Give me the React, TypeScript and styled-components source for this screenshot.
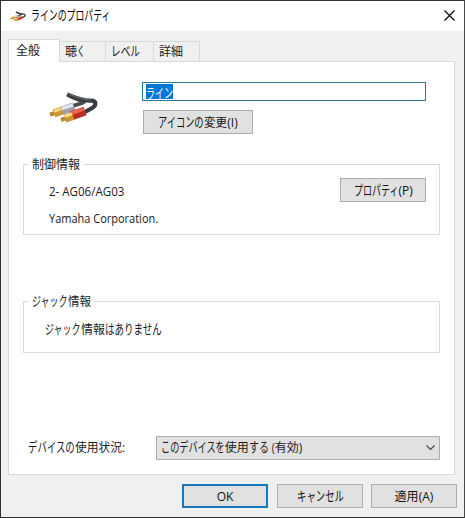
import React from 'react';
import styled, { createGlobalStyle } from 'styled-components';

const Global = createGlobalStyle`
  *{box-sizing:border-box}
  body{margin:0;background:#fff}
`;

const Dialog = styled.div`
  width:465px;height:518px;background:#f0f0f0;
  border:1px solid #35322f;border-right-color:#4b4947;
  display:flex;flex-direction:column;
  font:12px/18px "Open Sans","Noto Sans CJK JP",sans-serif;color:#1b1b1b;
`;
const TitleBar = styled.header`
  height:30px;background:#fff;display:flex;align-items:center;padding:0 9px;
`;
const Title = styled.h1`
  margin:0 auto 0 5px;font:inherit;color:#000;display:flex;
`;
const Close = styled.button`
  border:0;background:none;padding:0;width:11px;height:11px;display:flex;margin-top:-2px;
`;
const Tabs = styled.nav`
  display:flex;align-items:flex-end;height:30px;padding-left:7px;
`;
const Tab = styled.div<{ $w: number; $active?: boolean }>`
  width:${p => p.$w}px;height:${p => (p.$active ? 23 : 20)}px;
  border:1px solid #d9d9d9;border-bottom:0;border-left-width:${p => (p.$active ? 1 : 0)}px;
  background:${p => (p.$active ? '#fff' : '#f0f0f0')};
  margin-bottom:${p => (p.$active ? -1 : 0)}px;
  padding:${p => (p.$active ? '2px 0 0 7px' : '1px 0 0 5px')};
  display:flex;position:relative;
`;
const Panel = styled.main`
  margin:0 7px;width:447px;height:414px;background:#fff;border:1px solid #d9d9d9;
  padding:20px 14px 0;display:flex;flex-direction:column;
`;
const DeviceRow = styled.div`
  display:flex;height:73px;
`;
const DeviceIcon = styled.div`
  width:119px;padding:10px 0 0 26px;
`;
const DeviceFields = styled.div`
  display:flex;flex-direction:column;align-items:flex-start;gap:9px;
`;
const NameField = styled.div`
  width:284px;height:19px;border:1px solid #2b789b;padding:1px 3px;display:flex;
`;
const Selection = styled.span`
  background:#0078d7;color:#fff;display:flex;height:15px;line-height:17px;
`;
const Button = styled.button<{ $w: number; $primary?: boolean; $x?: number }>`
  width:${p => p.$w}px;height:24px;padding:1px 0 0;margin-left:${p => p.$x ?? 0}px;
  border:${p => (p.$primary ? '2px solid #1977bd' : '1px solid #adadad')};
  background:#e1e1e1;font:inherit;color:#111;
  display:flex;align-items:center;justify-content:center;
`;
const Group = styled.fieldset<{ $h: number; $gap: number }>`
  margin:0 0 ${p => p.$gap}px;padding:0;height:${p => p.$h}px;min-width:0;
  border:1px solid #dcdcdc;width:417px;
`;
const Legend = styled.legend`
  margin-left:5px;padding:0 3px;height:18px;line-height:20px;display:flex;
`;
const InfoRow = styled.div`
  display:flex;justify-content:space-between;padding:5px 13px 0 25px;
`;
const Facts = styled.div`
  display:flex;flex-direction:column;gap:9px;padding-top:5px;
`;
const Message = styled.div`
  padding:11px 0 0 21px;display:flex;
`;
const UsageRow = styled.div`
  display:flex;align-items:center;padding-left:5px;
`;
const UsageLabel = styled.div`
  width:128px;display:flex;
`;
const Select = styled.div`
  width:285px;height:24px;border:1px solid #adadad;background:#e1e1e1;
  display:flex;align-items:center;padding:0 4px;
`;
const Chevron = styled.svg`
  margin-left:auto;
`;
const Footer = styled.footer`
  display:flex;justify-content:flex-end;gap:9px;padding:9px 7px 0 0;
`;
const RunBox = styled.span<{ $w: number }>`
  display:inline-block;flex:none;width:${p => p.$w}px;white-space:pre;
`;
const RunText = styled.span<{ $s: number; $tall: number }>`
  display:inline-block;transform:scale(${p => p.$s},${p => p.$tall});transform-origin:0 50%;
`;

/* A stretch of text set to a given advance; kana are narrow and slightly tall. */
function Run({ w, natural, children }: { w: number; natural?: number; children: string }) {
  const kana = /^[\u3040-\u30ff]+$/.test(children);
  return (
    <RunBox $w={w}>
      <RunText $s={w / (natural ?? children.length * 12)} $tall={kana ? 1.12 : 1}>{children}</RunText>
    </RunBox>
  );
}

function Cable({ width, height }: { width: number; height: number }) {
  return (
    <svg width={width} height={height} viewBox="0 0 49 32" fill="none">
      <path d="M19 3C26 7 31 8 35 10C33 12 28 12 24 14" stroke="#4a4d51" strokeWidth="3.8" />
      <path d="M18 2.4C27 6 35 9.5 42 8.6C48 8.6 47 13.5 44 15.5L36 20" stroke="#393c40" strokeWidth="4.2" />
      <path d="M19 1.8C27 5 35 8.4 42 7.8" stroke="#6b6e72" strokeWidth="1" />
      <path d="M12 19L25 14.4" stroke="#a09fa8" strokeWidth="8.4" />
      <path d="M12.5 16.6L24 12.8" stroke="#e4e4ea" strokeWidth="3.4" />
      <path d="M1 22.6L6 21" stroke="#b88632" strokeWidth="4" />
      <path d="M5 21.4L13 18.8" stroke="#cf9434" strokeWidth="8" />
      <path d="M5 19.2L12 17" stroke="#ffdf86" strokeWidth="2.6" />
      <path d="M22 24L36 19" stroke="#b92e20" strokeWidth="9" />
      <path d="M21.5 21.6L34.5 17.2" stroke="#ed6850" strokeWidth="3.4" />
      <path d="M12 28L17 26.2" stroke="#b88632" strokeWidth="4" />
      <path d="M16 26.6L24 24" stroke="#cf9434" strokeWidth="8" />
      <path d="M15.6 24.4L23 22" stroke="#ffdf86" strokeWidth="2.6" />
    </svg>
  );
}

export default function App() {
  return (
    <>
      <Global />
      <Dialog>
        <TitleBar>
          <Cable width={16} height={11} />
          <Title><Run w={80}>ラインのプロパティ</Run></Title>
          <Close aria-label="閉じる">
            <svg width="11" height="11" viewBox="0 0 11 11"><path d="M.5.5L10.5 10.5M10.5.5L.5 10.5" stroke="#000" strokeWidth="1.1" /></svg>
          </Close>
        </TitleBar>
        <Tabs>
          <Tab $w={52} $active><Run w={24}>全般</Run></Tab>
          <Tab $w={46}><Run w={12}>聴</Run><Run w={8}>く</Run></Tab>
          <Tab $w={48}><Run w={29}>レベル</Run></Tab>
          <Tab $w={46}><Run w={24}>詳細</Run></Tab>
        </Tabs>
        <Panel>
          <DeviceRow>
            <DeviceIcon><Cable width={49} height={32} /></DeviceIcon>
            <DeviceFields>
              <NameField><Selection><Run w={27}>ライン</Run></Selection></NameField>
              <Button $w={110} $x={1}><Run w={46}>アイコンの</Run><Run w={23}>変更</Run><Run w={12} natural={12}>(I)</Run></Button>
            </DeviceFields>
          </DeviceRow>
          <Group $h={80} $gap={57}>
            <Legend><Run w={48}>制御情報</Run></Legend>
            <InfoRow>
              <Facts>
                <Run w={76} natural={79}>2- AG06/AG03</Run>
                <Run w={109} natural={119}>Yamaha Corporation.</Run>
              </Facts>
              <Button $w={86}><Run w={45}>プロパティ</Run><Run w={14} natural={14}>(P)</Run></Button>
            </InfoRow>
          </Group>
          <Group $h={61} $gap={83}>
            <Legend><Run w={36}>ジャック</Run><Run w={23}>情報</Run></Legend>
            <Message><Run w={36}>ジャック</Run><Run w={24}>情報</Run><Run w={57}>はありません</Run></Message>
          </Group>
          <UsageRow>
            <UsageLabel><Run w={47}>デバイスの</Run><Run w={47}>使用状況</Run><Run w={3} natural={3}>:</Run></UsageLabel>
            <Select>
              <Run w={64}>このデバイスを</Run><Run w={24}>使用</Run><Run w={20}>する</Run><Run w={6} natural={7}> (</Run><Run w={24}>有効</Run><Run w={4} natural={4}>)</Run>
              <Chevron width="9" height="6" viewBox="0 0 9 6"><path d="M.5.5L4.5 4.5L8.5.5" fill="none" stroke="#444" strokeWidth="1.1" /></Chevron>
            </Select>
          </UsageRow>
        </Panel>
        <Footer>
          <Button $w={86} $primary><Run w={17} natural={17}>OK</Run></Button>
          <Button $w={86}><Run w={47}>キャンセル</Run></Button>
          <Button $w={86} $x={-1}><Run w={24}>適用</Run><Run w={15} natural={15}>(A)</Run></Button>
        </Footer>
      </Dialog>
    </>
  );
}
